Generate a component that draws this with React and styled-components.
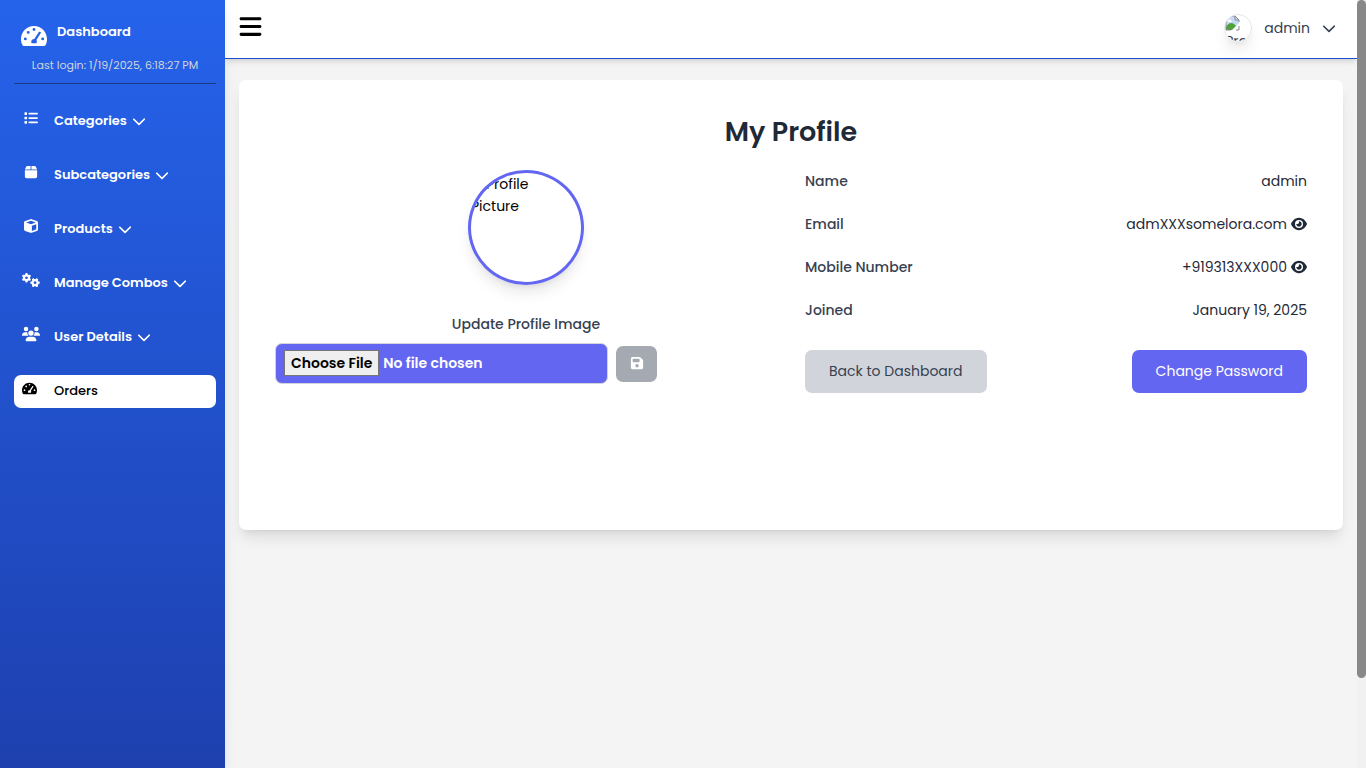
import React from "react";
import styled, { createGlobalStyle } from "styled-components";
import {
  FaBars,
  FaBox,
  FaChevronDown,
  FaCube,
  FaEye,
  FaFloppyDisk,
  FaGears,
  FaList,
  FaUsers,
} from "react-icons/fa6";

const GlobalStyle = createGlobalStyle`
  *, *::before, *::after { box-sizing: border-box; }
  body {
    margin: 0;
    background: #f4f4f4;
    color: #000;
    font-family: Poppins, Inter, "Open Sans", sans-serif;
    font-size: 14px;
    line-height: 22px;
  }
  button, input { font: inherit; }
  h1, p, dl, dd, ul { margin: 0; padding: 0; }
  svg { display: block; flex: none; }
`;

const Shell = styled.div`
  display: flex;
  min-height: 100vh;
`;

const Sidebar = styled.aside`
  flex: none;
  width: 225px;
  padding: 22px 9px 22px 14px;
  color: #fff;
  background: linear-gradient(to bottom, #2563eb, #1e40af);
  box-shadow: 0 10px 15px -3px rgba(0, 0, 0, 0.1), 0 4px 6px -4px rgba(0, 0, 0, 0.1);
  z-index: 1;
`;

const Brand = styled.div`
  display: flex;
  gap: 10px;
  height: 28px;
  padding-left: 7px;
  font-size: 13px;
  font-weight: 600;
  line-height: 20px;

  svg { margin-top: 1px; }
`;

const LastLogin = styled.p`
  padding: 6px 0 9px;
  border-bottom: 1px solid #1f3b80;
  color: #d1d5db;
  font-size: 11px;
  line-height: 18px;
  text-align: center;
`;

const NavList = styled.ul`
  display: flex;
  flex-direction: column;
  gap: 21px;
  margin-top: 21px;
  list-style: none;
`;

const NavButton = styled.button`
  display: grid;
  grid-template-columns: 18px auto;
  align-items: start;
  justify-content: start;
  column-gap: 14px;
  width: 100%;
  height: 33px;
  padding: 5px 8px;
  border: 0;
  border-radius: 7px;
  background: ${(p) => (p.$active ? "#fff" : "transparent")};
  color: ${(p) => (p.$active ? "#000" : "#fff")};
  font-size: 13px;
  font-weight: ${(p) => (p.$active ? 500 : 600)};
  text-align: left;
`;

const NavIcon = styled.span`
  display: flex;
  align-items: center;
  justify-content: ${(p) => (p.$active ? "flex-start" : "center")};
  height: 16px;
`;

const NavLabel = styled.span`
  display: flex;
  align-items: center;
  gap: 5px;
`;

const Page = styled.div`
  display: flex;
  flex: 1;
  flex-direction: column;
  min-width: 0;
`;

const TopBar = styled.header`
  display: flex;
  align-items: center;
  justify-content: space-between;
  height: 59px;
  padding: 0 21px 3px 13px;
  border-bottom: 1px solid #1d4ed8;
  background: #fff;
  box-shadow: 0 4px 6px -1px rgba(0, 0, 0, 0.1), 0 2px 4px -2px rgba(0, 0, 0, 0.1);
`;

const MenuButton = styled.button`
  padding: 0 0 2px;
  border: 0;
  background: none;
  color: #000;
`;

const AccountButton = styled.button`
  display: flex;
  align-items: center;
  gap: 12px;
  padding: 0;
  border: 0;
  background: none;
  color: #374151;
  font-size: 14px;
`;

const Avatar = styled.span`
  width: 28px;
  height: 28px;
  overflow: hidden;
  border: 1px solid #e5e7eb;
  border-radius: 50%;
  box-shadow: 0 10px 15px -3px rgba(0, 0, 0, 0.1), 0 4px 6px -4px rgba(0, 0, 0, 0.1);
  line-height: 20px;
  text-align: left;
`;

const Card = styled.main`
  min-height: 450px;
  margin: 21px 14px;
  padding: 36px;
  border-radius: 7px;
  background: #fff;
  box-shadow: 0 10px 15px -3px rgba(0, 0, 0, 0.1), 0 4px 6px -4px rgba(0, 0, 0, 0.1);
`;

const Title = styled.h1`
  margin-bottom: 22px;
  color: #1f2937;
  font-size: 27px;
  font-weight: 600;
  line-height: 32px;
  text-align: center;
`;

const Columns = styled.div`
  display: grid;
  grid-template-columns: 1fr 1fr;
  gap: 28px;
`;

const PhotoColumn = styled.section`
  display: flex;
  flex-direction: column;
  align-items: center;
`;

const Portrait = styled.div`
  width: 116px;
  height: 115px;
  overflow: hidden;
  border: 3px solid #6366f1;
  border-radius: 50%;
  box-shadow: 0 10px 15px -3px rgba(0, 0, 0, 0.1), 0 4px 6px -4px rgba(0, 0, 0, 0.1);
`;

const PortraitLine = styled.span`
  display: block;
  text-indent: ${(p) => p.$indent}px;
`;

const UploadLabel = styled.label`
  margin: 28px 0 8px;
  color: #374151;
  font-weight: 500;
`;

const UploadRow = styled.div`
  display: flex;
  align-items: center;
  gap: 8px;
  width: 100%;
`;

const FileInput = styled.input`
  width: 333px;
  height: 41px;
  padding: 6px 8px;
  border: 1px solid #d1d5db;
  border-radius: 7px;
  background: #6366f1;
  color: #fff;
  font-weight: 600;

  &::file-selector-button {
    height: 26px;
    margin: 0 4px 0 0;
    padding: 0 6px;
    border: 1px solid #767676;
    border-radius: 0;
    background: #efefef;
    color: #000;
    font: inherit;
  }
`;

const SaveButton = styled.button`
  display: grid;
  place-items: center;
  width: 41px;
  height: 36px;
  padding: 0 0 2px;
  border: 0;
  border-radius: 7px;
  background: #a5a9b1;
  color: #fff;
`;

const Details = styled.dl`
  display: flex;
  flex-direction: column;
  gap: 21px;
  padding-bottom: 29px;
`;

const DetailRow = styled.div`
  display: flex;
  justify-content: space-between;

  dt { color: #374151; font-weight: 500; }
  dd { display: flex; align-items: center; gap: 4px; color: #1f2937; }
`;

const RevealButton = styled.button`
  padding: 0;
  border: 0;
  background: none;
  color: inherit;
`;

const Actions = styled.div`
  display: flex;
  justify-content: space-between;
`;

const ActionButton = styled.button`
  height: 43px;
  padding: 0 24px 2px;
  border: 0;
  border-radius: 7px;
  background: ${(p) => (p.$primary ? "#6366f1" : "#d1d5db")};
  color: ${(p) => (p.$primary ? "#fff" : "#374151")};
`;

const ScrollTrack = styled.div`
  flex: none;
  width: 9px;
  background: #f1f1f1;
`;

const ScrollThumb = styled.div`
  height: 88.3vh;
  border-radius: 5px;
  background: #888;
`;

const Gauge = ({ size }) => (
  <svg width={size} height={size} viewBox="0 0 576 512" fill="currentColor" aria-hidden="true">
    <path
      fillRule="evenodd"
      d="M288 32C129 32 0 161 0 320c0 48 10 94 28 132 8 17 24 28 44 28h432c20 0 36-11 44-28 18-38 28-84 28-132C576 161 447 32 288 32z
        M96 352a32 32 0 1 1 0-64 32 32 0 0 1 0 64z
        M160 208a32 32 0 1 1 0-64 32 32 0 0 1 0 64z
        M288 144a32 32 0 1 1 0-64 32 32 0 0 1 0 64z
        M480 352a32 32 0 1 1 0-64 32 32 0 0 1 0 64z
        M427 166c-11-8-26-6-34 5L294 320c-36-2-66 25-68 60-1 13 3 26 9 36h106c7-11 11-24 11-36 0-13-4-25-11-35l91-145c8-11 14-26 5-34z"
    />
  </svg>
);

const BrokenImage = () => (
  <svg width="16" height="16" viewBox="0 0 16 16" aria-hidden="true">
    <path d="M1 1h9l4 4v10H1z" fill="#c6d9f5" />
    <path d="M1 12c3-5 7-5 10-1v4H1z" fill="#4da338" />
    <path d="M3 6c0-2 3-2 3 0h1v1H3z" fill="#fff" />
    <path d="M6 16 15 7v9z" fill="#fff" />
    <path d="M1 15V1h9l4 4v2M10 1v4h4M1 15h5M14 11v4h-3" fill="none" stroke="#8b8b8b" />
  </svg>
);

const NAV = [
  { label: "Categories", Icon: FaList, size: 14 },
  { label: "Subcategories", Icon: FaBox, size: 14 },
  { label: "Products", Icon: FaCube, size: 14 },
  { label: "Manage Combos", Icon: FaGears, size: 18 },
  { label: "User Details", Icon: FaUsers, size: 18 },
  { label: "Orders", Icon: Gauge, size: 15, active: true },
];

const DETAILS = [
  { label: "Name", value: "admin" },
  { label: "Email", value: "admXXXsomelora.com", masked: true },
  { label: "Mobile Number", value: "+919313XXX000", masked: true },
  { label: "Joined", value: "January 19, 2025" },
];

export default function App() {
  return (
    <>
      <GlobalStyle />
      <Shell>
        <Sidebar>
          <Brand>
            <Gauge size={26} />
            Dashboard
          </Brand>
          <LastLogin>Last login: 1/19/2025, 6:18:27 PM</LastLogin>
          <nav>
            <NavList>
              {NAV.map(({ label, Icon, size, active }) => (
                <li key={label}>
                  <NavButton type="button" $active={active}>
                    <NavIcon $active={active}>
                      <Icon size={size} />
                    </NavIcon>
                    <NavLabel>
                      {label}
                      {!active && <FaChevronDown size={14} />}
                    </NavLabel>
                  </NavButton>
                </li>
              ))}
            </NavList>
          </nav>
        </Sidebar>
        <Page>
          <TopBar>
            <MenuButton type="button" aria-label="Toggle menu">
              <FaBars size={25} />
            </MenuButton>
            <AccountButton type="button">
              <Avatar>
                <BrokenImage />
                Profile
              </Avatar>
              admin
              <FaChevronDown size={14} />
            </AccountButton>
          </TopBar>
          <Card>
            <Title>My Profile</Title>
            <Columns>
              <PhotoColumn>
                <Portrait role="img" aria-label="Profile Picture">
                  <PortraitLine $indent={15}>Profile</PortraitLine>
                  <PortraitLine $indent={0}>Picture</PortraitLine>
                </Portrait>
                <UploadLabel htmlFor="profile-image">Update Profile Image</UploadLabel>
                <UploadRow>
                  <FileInput id="profile-image" type="file" />
                  <SaveButton type="button" aria-label="Save image">
                    <FaFloppyDisk size={14} />
                  </SaveButton>
                </UploadRow>
              </PhotoColumn>
              <section>
                <Details>
                  {DETAILS.map(({ label, value, masked }) => (
                    <DetailRow key={label}>
                      <dt>{label}</dt>
                      <dd>
                        {value}
                        {masked && (
                          <RevealButton type="button" aria-label={`Show ${label}`}>
                            <FaEye size={16} />
                          </RevealButton>
                        )}
                      </dd>
                    </DetailRow>
                  ))}
                </Details>
                <Actions>
                  <ActionButton type="button">Back to Dashboard</ActionButton>
                  <ActionButton type="button" $primary>
                    Change Password
                  </ActionButton>
                </Actions>
              </section>
            </Columns>
          </Card>
        </Page>
        <ScrollTrack aria-hidden="true">
          <ScrollThumb />
        </ScrollTrack>
      </Shell>
    </>
  );
}
